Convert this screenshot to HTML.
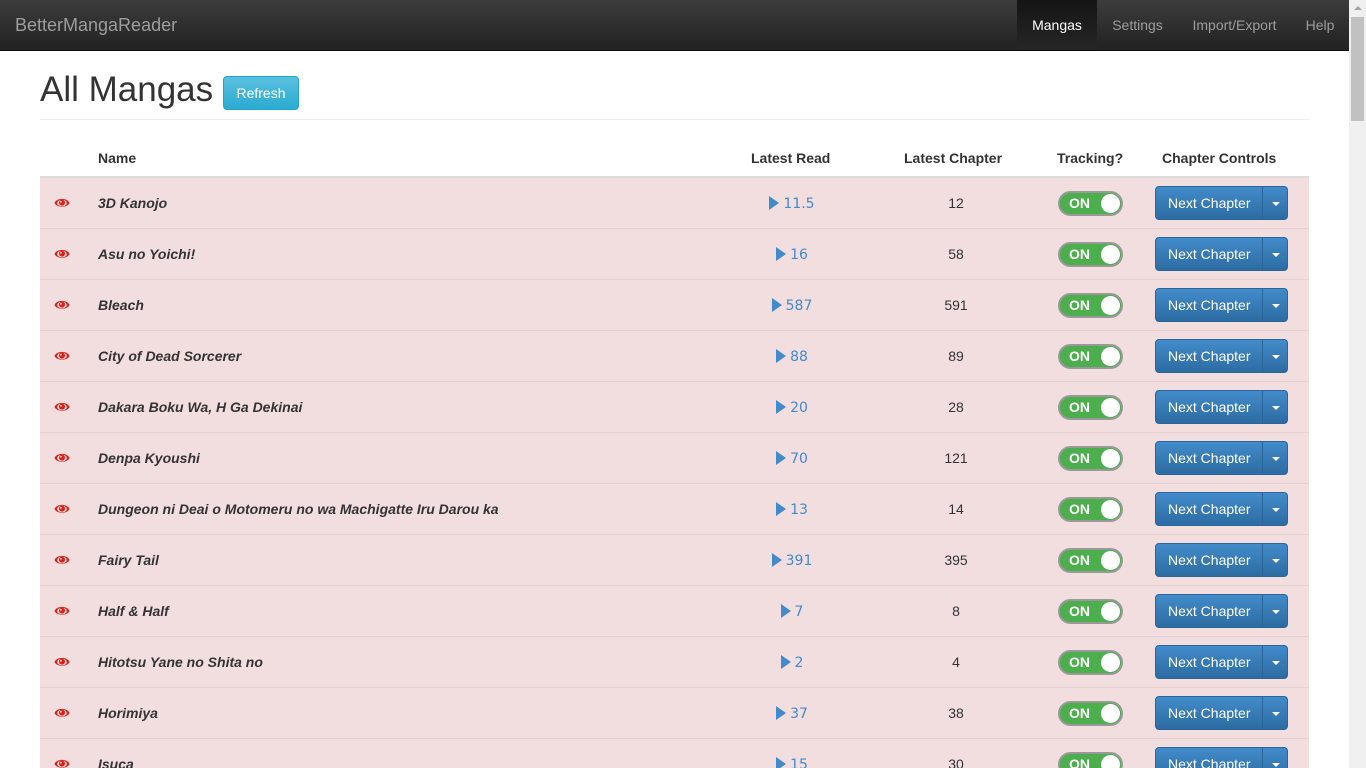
<!DOCTYPE html>
<html><head><style>
*{box-sizing:border-box}
html{overflow:hidden;height:768px}
body{margin:0;font-family:"Liberation Sans",Arial,sans-serif;font-size:14px;color:#333;background:#fff;width:1366px;height:768px;overflow:hidden;position:relative}
.nav{position:absolute;left:0;top:0;width:1349px;height:51px;background:linear-gradient(#3c3c3c,#222);border-bottom:1px solid #080808}
.brand{position:absolute;left:15px;top:15px;font-size:18px;color:#9d9d9d}
.nav .it{position:absolute;top:0;height:50px;line-height:50px;color:#9d9d9d;font-size:14px;text-align:center}
.nav .act{background:linear-gradient(#151515,#262626);color:#fff}
.sb{position:absolute;left:1349px;top:0;width:17px;height:768px;background:#f0f0f0}
.sb .th{position:absolute;left:2px;top:17px;width:13px;height:104px;background:#c1c1c1}
.sb .up{position:absolute;left:5px;top:6px;border:4px solid transparent;border-bottom:4px solid #a3a3a3;border-top:0}
h1{position:absolute;left:40px;top:70px;margin:0;font-size:35px;font-weight:normal;line-height:40px}
.ref{position:absolute;left:223px;top:76px;width:76px;height:34px;border-radius:4px;background:linear-gradient(#5bc0de,#2aabd2);border:1px solid #28a4c9;color:#fff;font-size:14px;text-align:center;line-height:32px}
.hr{position:absolute;left:40px;top:119px;width:1269px;border-top:1px solid #eee}
.th2{position:absolute;top:150px;font-weight:bold;font-size:14px}
.hline{position:absolute;left:40px;top:176px;width:1269px;height:2px;background:#ddd}
.row{position:absolute;left:40px;width:1269px;height:51px;background:#f2dede;border-bottom:1px solid #e4d2d2}
.row>*{position:absolute}
.eye{left:14px;top:18px}
.nm{left:58px;top:17px;font-weight:bold;font-style:italic}
.lr{left:690px;width:124px;text-align:center;top:18px;color:#428bca;font-family:"DejaVu Sans",sans-serif;font-size:14px}
.lr b{display:inline-block;width:0;height:0;border-left:10px solid #428bca;border-top:7px solid transparent;border-bottom:7px solid transparent;vertical-align:-2px;margin-right:4px}
.lc{left:850px;width:132px;text-align:center;top:17px}
.tg{left:1018px;top:13px;width:65px;height:25px;border-radius:13px;background:#4cae4c;border:2px solid #999}
.tg span{position:absolute;left:9px;top:2px;color:#fff;font-weight:bold;font-size:14px}
.tg i{position:absolute;right:1px;top:1px;width:19px;height:19px;border-radius:50%;background:#fff}
.bt{left:1115px;top:8px;width:133px;height:34px;border-radius:4px;background:linear-gradient(#428bca,#2d6ca2);border:1px solid #2b669a;color:#fff;line-height:32px}
.bt span{position:absolute;left:12px}
.bt em{position:absolute;left:106px;top:0;height:32px;border-left:1px solid #2b669a}
.bt u{position:absolute;left:116px;top:15px;border-left:4px solid transparent;border-right:4px solid transparent;border-top:4px solid #fff}
</style></head><body>
<div class="nav"><div class="brand">BetterMangaReader</div>
<div class="it act" style="left:1017px;width:80px">Mangas</div>
<div class="it" style="left:1097px;width:81px">Settings</div>
<div class="it" style="left:1178px;width:113px">Import/Export</div>
<div class="it" style="left:1291px;width:58px">Help</div></div>
<div class="sb"><div class="up"></div><div class="th"></div></div>
<h1>All Mangas</h1><div class="ref">Refresh</div><div class="hr"></div>
<div class="th2" style="left:98px">Name</div>
<div class="th2" style="left:751px">Latest Read</div>
<div class="th2" style="left:904px">Latest Chapter</div>
<div class="th2" style="left:1057px">Tracking?</div>
<div class="th2" style="left:1162px">Chapter Controls</div>
<div class="hline"></div>
<div id="rows"></div>
<script>
var d=[["3D Kanojo","11.5","12"],["Asu no Yoichi!","16","58"],["Bleach","587","591"],["City of Dead Sorcerer","88","89"],["Dakara Boku Wa, H Ga Dekinai","20","28"],["Denpa Kyoushi","70","121"],["Dungeon ni Deai o Motomeru no wa Machigatte Iru Darou ka","13","14"],["Fairy Tail","391","395"],["Half &amp; Half","7","8"],["Hitotsu Yane no Shita no","2","4"],["Horimiya","37","38"],["Isuca","15","30"]];
var h="";d.forEach(function(r,i){h+='<div class="row" style="top:'+(178+i*51)+'px"><svg class="eye" width="16" height="13" viewBox="0 0 16 13"><path d="M0.5 7C2.5 1.5 13.5 1.5 15.5 7C13.5 12 2.5 12 0.5 7Z" fill="#d9221c"/><ellipse cx="8" cy="7" rx="4.8" ry="3.3" fill="#f2dede"/><circle cx="8" cy="6.6" r="3" fill="#d9221c"/><circle cx="7" cy="5.8" r="0.9" fill="#f2dede"/></svg><div class="nm">'+r[0]+'</div><div class="lr"><b></b>'+r[1]+'</div><div class="lc">'+r[2]+'</div><div class="tg"><span>ON</span><i></i></div><div class="bt"><span>Next Chapter</span><em></em><u></u></div></div>'});
document.getElementById("rows").innerHTML=h;
</script>
</body></html>
